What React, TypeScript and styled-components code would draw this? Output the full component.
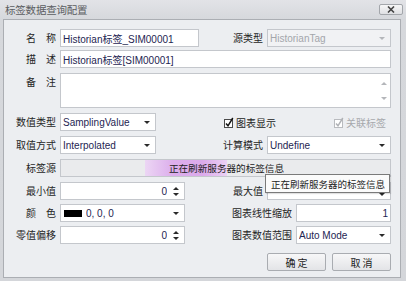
import React from 'react';
import styled, { createGlobalStyle } from 'styled-components';

const Global = createGlobalStyle`
  html, body { margin: 0; padding: 0; background: #d7d9dd; }
  body { font-family: "Liberation Sans", "Noto Sans CJK SC", sans-serif; font-size: 10px; }
  * { box-sizing: border-box; }
`;

const CJK = `"Noto Sans CJK SC", "Liberation Sans", sans-serif`;

const Window = styled.div`
  width: 406px;
  height: 281px;
  display: flex;
  flex-direction: column;
  background: linear-gradient(#e2e3e7, #d6d8dc 19px, #d4d6da);
  overflow: hidden;
`;

const TitleBar = styled.div`
  height: 19px;
  flex: none;
  display: flex;
  align-items: center;
  justify-content: space-between;
  padding: 0 3px 0 5px;
`;

const Title = styled.div`
  font-family: ${CJK};
  font-size: 10.5px;
  color: #5b5d61;
  letter-spacing: -0.2px;
`;

const CloseButton = styled.div`
  width: 24px;
  height: 11px;
  border: 1px solid #a3a6ab;
  border-radius: 2px;
  background: linear-gradient(#f6f6f7, #dfe0e3);
  display: flex;
  align-items: center;
  justify-content: center;
`;

const Panel = styled.div`
  flex: 1;
  margin: 0 5px 3px 3px;
  border: 1px solid #abaeb3;
  background: #eceef1;
  display: flex;
  flex-direction: column;
  padding-top: 9px;
`;

const Row = styled.div<{ $h: number }>`
  height: ${(p) => p.$h}px;
  flex: none;
  display: flex;
  align-items: flex-start;
  position: relative;
`;

const Label = styled.div<{ $w: number; $muted?: boolean }>`
  width: ${(p) => p.$w}px;
  flex: none;
  text-align: right;
  padding-right: 4px;
  line-height: 18px;
  font-family: ${CJK};
  font-size: 10px;
  color: ${(p) => (p.$muted ? '#9ea1a6' : '#252525')};
  white-space: pre;
`;

const Field = styled.div<{ $w: number; $h?: number; $disabled?: boolean; $right?: boolean }>`
  width: ${(p) => p.$w}px;
  height: ${(p) => p.$h ?? 18}px;
  flex: none;
  border: 1px solid #c4c7cc;
  background: ${(p) => (p.$disabled ? '#f1f2f4' : '#ffffff')};
  color: ${(p) => (p.$disabled ? '#a3a6ab' : '#1e2552')};
  display: flex;
  align-items: center;
  justify-content: ${(p) => (p.$right ? 'flex-end' : 'flex-start')};
  padding: 0 2px;
  font-size: 10px;
  white-space: nowrap;
  position: relative;
`;

const Value = styled.span<{ $right?: boolean }>`
  flex: 1;
  overflow: hidden;
  text-align: ${(p) => (p.$right ? 'right' : 'left')};
`;

const Arrow = styled.span<{ $muted?: boolean; $up?: boolean }>`
  width: 0;
  height: 0;
  flex: none;
  border-left: 3px solid transparent;
  border-right: 3px solid transparent;
  ${(p) =>
    p.$up
      ? `border-bottom: 3px solid ${p.$muted ? '#b4b6ba' : '#2a2a2a'};`
      : `border-top: 3px solid ${p.$muted ? '#b4b6ba' : '#2a2a2a'};`}
`;

const DropArrowBox = styled.span`
  width: 12px;
  flex: none;
  display: flex;
  justify-content: center;
`;

const SpinBox = styled.span`
  width: 12px;
  height: 100%;
  flex: none;
  display: flex;
  flex-direction: column;
  align-items: center;
  justify-content: center;
  gap: 3px;
  margin-left: 3px;
`;

const ScrollBar = styled.div`
  position: absolute;
  right: 0;
  top: 0;
  bottom: 0;
  width: 13px;
  display: flex;
  flex-direction: column;
  align-items: center;
  justify-content: space-between;
  padding: 8px 0 7px;
`;

const Swatch = styled.span`
  width: 18px;
  height: 7px;
  background: #000;
  flex: none;
  margin: 0 4px 0 1px;
`;

const Progress = styled.div<{ $w: number }>`
  width: ${(p) => p.$w}px;
  height: 18px;
  flex: none;
  border: 1px solid #c4c7cc;
  background:
    linear-gradient(90deg,
      transparent 0 25.5%,
      #ecd6f4 25.5%,
      #dcaeec 34%,
      #dbaaeb 43%,
      #e6c4f1 48%,
      #ecd3f4 50.5%,
      transparent 50.5%),
    #eaebed;
  display: flex;
  align-items: center;
  justify-content: center;
  font-family: ${CJK};
  font-size: 9.6px;
  color: #222;
  padding-left: 2px;
`;

const CheckWrap = styled.div<{ $ml: number; $muted?: boolean }>`
  margin-left: ${(p) => p.$ml}px;
  display: flex;
  align-items: center;
  height: 18px;
  gap: 2px;
  font-family: ${CJK};
  font-size: 10px;
  color: ${(p) => (p.$muted ? '#a7a9ad' : '#222')};
`;

const Tooltip = styled.div`
  position: absolute;
  left: 261px;
  top: -8px;
  height: 19px;
  padding: 0 4px 0 5px;
  border: 1px solid #7a7a7a;
  background: #fbfbfb;
  box-shadow: 1px 1px 1px rgba(0, 0, 0, 0.12);
  display: flex;
  align-items: center;
  font-family: ${CJK};
  font-size: 9.5px;
  color: #222;
  white-space: nowrap;
`;

const ButtonRow = styled.div`
  display: flex;
  justify-content: flex-end;
  gap: 6px;
  padding-right: 9px;
`;

const Button = styled.div`
  width: 59px;
  height: 18px;
  border: 1px solid #a9acb1;
  border-radius: 2px;
  background: linear-gradient(#f7f7f8, #e3e4e7);
  display: flex;
  align-items: center;
  justify-content: center;
  font-family: ${CJK};
  font-size: 10px;
  color: #222;
  white-space: pre;
`;

const Check = ({ muted }: { muted?: boolean }) => (
  <svg width="10" height="11" viewBox="0 0 10 11">
    <rect x="0.5" y="2.5" width="8" height="8" fill="#fff" stroke={muted ? '#b9bbbf' : '#4a4a4a'} />
    <path d="M2 6.5 L4 8.8 L8.8 1" fill="none" stroke={muted ? '#b0b2b6' : '#151515'} strokeWidth="1.5" />
  </svg>
);

const Dropdown = ({ w, text, disabled }: { w: number; text: string; disabled?: boolean }) => (
  <Field $w={w} $disabled={disabled}>
    <Value>{text}</Value>
    <DropArrowBox>
      <Arrow $muted={disabled} />
    </DropArrowBox>
  </Field>
);

const Spin = ({ w, value }: { w: number; value: string }) => (
  <Field $w={w} $right>
    <Value $right>{value}</Value>
    <SpinBox>
      <Arrow $up />
      <Arrow />
    </SpinBox>
  </Field>
);

export default function App() {
  return (
    <>
      <Global />
      <Window>
        <TitleBar>
          <Title>标签数据查询配置</Title>
          <CloseButton>
            <svg width="8" height="7" viewBox="0 0 8 7">
              <path d="M1 0.5 L7 6.5 M7 0.5 L1 6.5" stroke="#444" strokeWidth="1.6" />
            </svg>
          </CloseButton>
        </TitleBar>
        <Panel>
          <Row $h={21}>
            <Label $w={56}>名　称</Label>
            <Field $w={139}>Historian标签_SIM00001</Field>
            <Label $w={68}>源类型</Label>
            <Dropdown w={124} text="HistorianTag" disabled />
          </Row>
          <Row $h={23}>
            <Label $w={56}>描　述</Label>
            <Field $w={331}>Historian标签[SIM00001]</Field>
          </Row>
          <Row $h={40}>
            <Label $w={56}>备　注</Label>
            <Field $w={331} $h={35}>
              <ScrollBar>
                <Arrow $up $muted />
                <Arrow $muted />
              </ScrollBar>
            </Field>
          </Row>
          <Row $h={23}>
            <Label $w={56}>数值类型</Label>
            <Dropdown w={96} text="SamplingValue" />
            <CheckWrap $ml={68}>
              <Check />
              图表显示
            </CheckWrap>
            <CheckWrap $ml={58} $muted>
              <Check muted />
              关联标签
            </CheckWrap>
          </Row>
          <Row $h={23}>
            <Label $w={56}>取值方式</Label>
            <Dropdown w={96} text="Interpolated" />
            <Label $w={111}>计算模式</Label>
            <Dropdown w={124} text="Undefine" />
          </Row>
          <Row $h={23}>
            <Label $w={56}>标签源</Label>
            <Progress $w={331}>正在刷新服务器的标签信息</Progress>
          </Row>
          <Row $h={22}>
            <Label $w={56}>最小值</Label>
            <Spin w={125} value="0" />
            <Label $w={82}>最大值</Label>
            <Spin w={124} value="" />
            <Tooltip>正在刷新服务器的标签信息</Tooltip>
          </Row>
          <Row $h={22}>
            <Label $w={56}>颜　色</Label>
            <Field $w={125}>
              <Swatch />
              <Value>0, 0, 0</Value>
              <DropArrowBox>
                <Arrow />
              </DropArrowBox>
            </Field>
            <Label $w={111}>图表线性缩放</Label>
            <Field $w={95} $right>
              <Value $right>1</Value>
            </Field>
          </Row>
          <Row $h={27}>
            <Label $w={56}>零值偏移</Label>
            <Spin w={125} value="0" />
            <Label $w={111}>图表数值范围</Label>
            <Dropdown w={95} text="Auto Mode" />
          </Row>
          <ButtonRow>
            <Button>确 定</Button>
            <Button>取 消</Button>
          </ButtonRow>
        </Panel>
      </Window>
    </>
  );
}
